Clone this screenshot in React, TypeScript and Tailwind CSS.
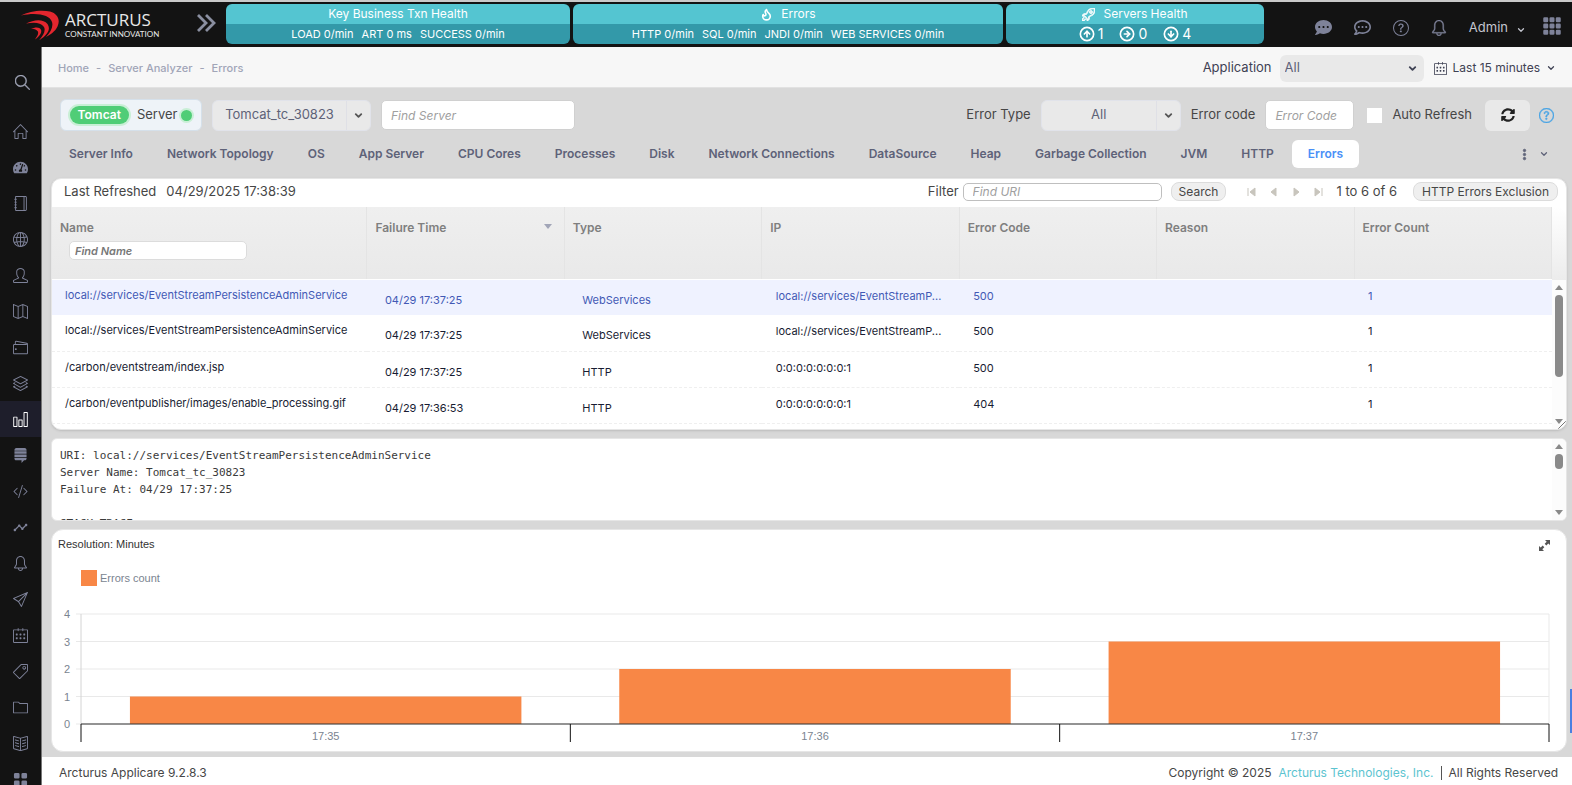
import React from "react";
import {
  SlBell,
  SlBookOpen,
  SlCalender,
  SlChart,
  SlFolder,
  SlGlobe,
  SlHome,
  SlLayers,
  SlMagnifier,
  SlMap,
  SlNotebook,
  SlPaperPlane,
  SlRocket,
  SlTag,
  SlUser,
  SlWallet,
} from "react-icons/sl";
import { FaCommentDots, FaRegCommentDots, FaStackExchange, FaTachometerAlt } from "react-icons/fa";
import { BsCodeSlash, BsGrid3X3GapFill, BsGridFill, BsQuestionCircle, BsThreeDotsVertical } from "react-icons/bs";
import { MdTimeline } from "react-icons/md";
import { ChevronDown, CircleArrowDown, CircleArrowRight, CircleArrowUp, Flame } from "lucide-react";

const sideItems = [
  { label: "Home", icon: SlHome },
  { label: "Dashboard", icon: FaTachometerAlt },
  { label: "Notebook", icon: SlNotebook },
  { label: "Web", icon: SlGlobe },
  { label: "Users", icon: SlUser },
  { label: "Map", icon: SlMap },
  { label: "Wallet", icon: SlWallet },
  { label: "Layers", icon: SlLayers },
  { label: "Server Analyzer", icon: SlChart, active: true },
  { label: "Stack", icon: FaStackExchange },
  { label: "Code", icon: BsCodeSlash },
  { label: "Trends", icon: MdTimeline },
  { label: "Alerts", icon: SlBell },
  { label: "Send", icon: SlPaperPlane },
  { label: "Calendar", icon: SlCalender },
  { label: "Tags", icon: SlTag },
  { label: "Files", icon: SlFolder },
  { label: "Docs", icon: SlBookOpen },
  { label: "Apps", icon: BsGridFill },
];

const tabs = [
  "Server Info",
  "Network Topology",
  "OS",
  "App Server",
  "CPU Cores",
  "Processes",
  "Disk",
  "Network Connections",
  "DataSource",
  "Heap",
  "Garbage Collection",
  "JVM",
  "HTTP",
  "Errors",
];

const serverStates = [
  { label: "Up", count: 1, icon: CircleArrowUp },
  { label: "Idle", count: 0, icon: CircleArrowRight },
  { label: "Down", count: 4, icon: CircleArrowDown },
];

const columns = ["Name", "Failure Time", "Type", "IP", "Error Code", "Reason", "Error Count"];

const LONG_URI = "local://services/EventStreamPersistenceAdminService";

const rows = [
  { name: LONG_URI, time: "04/29 17:37:25", type: "WebServices", ip: "local://services/EventStreamP...", code: 500, count: 1 },
  { name: LONG_URI, time: "04/29 17:37:25", type: "WebServices", ip: "local://services/EventStreamP...", code: 500, count: 1 },
  { name: "/carbon/eventstream/index.jsp", time: "04/29 17:37:25", type: "HTTP", ip: "0:0:0:0:0:0:0:1", code: 500, count: 1 },
  { name: "/carbon/eventpublisher/images/enable_processing.gif", time: "04/29 17:36:53", type: "HTTP", ip: "0:0:0:0:0:0:0:1", code: 404, count: 1 },
];

const chartData = [
  { label: "17:35", value: 1 },
  { label: "17:36", value: 2 },
  { label: "17:37", value: 3 },
];

const Logo = () => (
  <a href="#" className="flex items-center gap-[5px] pl-5 text-[#e8e8e8]">
    <svg viewBox="0 0 40 30" className="h-[30px] w-10" fill="#e3262e">
      <path d="M1 5.500C9 1 22-.5 30 1.500c8 2.300 10.500 8.500 7.500 15-2.300 5-7 8-11.500 10.500 4.500-5 7.500-10 6-15C30 4.500 16 2 1 5.500Z" />
      <path d="M6 13.500c8-4 17-5 21.500.5 4 6-1 11.500-8.500 16.500 4-5 7-9.500 5-13.500-3.500-5-10-5-18-3.500Z" />
      <path d="M11 19c4-2 8.500-2.300 10 .8 1.300 3.400-2 7-6 9.700 2.300-3.500 4-6 2.700-8.300-1.500-2-3.700-2.400-6.700-2.200Z" />
    </svg>
    <span className="flex flex-col font-['Open_Sans',sans-serif]">
      <span className="text-[17px] leading-[18px]">ARCTURUS</span>
      <span className="font-['Lato',sans-serif] text-[8px] leading-[10px] whitespace-nowrap">CONSTANT INNOVATION</span>
    </span>
  </a>
);

const HealthPanel = ({ title, icon, className, children }: { title: string; icon?: React.ReactNode; className: string; children: React.ReactNode }) => (
  <section className={`flex h-10 min-w-0 flex-col overflow-hidden rounded-md text-white ${className}`}>
    <h2 className="flex h-5 items-center justify-center gap-2 bg-[#54c5d1] text-xs">
      {icon}
      {title}
    </h2>
    <div className="flex h-5 items-center justify-center gap-2 bg-[#3399a9] text-[11px] whitespace-nowrap">{children}</div>
  </section>
);

const Header = () => (
  <header className="flex h-[47px] shrink-0 items-start border-t-2 border-[#c9c9c9] bg-[#131313]">
    <div className="flex h-[45px] w-[226px] shrink-0 items-center justify-between pr-[10px]">
      <Logo />
      <button aria-label="Expand menu" className="mb-1 text-[#8a8fa0]">
        <svg viewBox="0 0 20 18" className="h-[18px] w-5" fill="none" stroke="currentColor" strokeWidth="2.8">
          <path d="M2 1l8 8-8 8M10 1l8 8-8 8" />
        </svg>
      </button>
    </div>
    <div className="flex min-w-0 flex-1 gap-[3px] pt-[2px]">
      <HealthPanel title="Key Business Txn Health" className="flex-[344]">
        <span>LOAD 0/min</span>
        <span>ART 0 ms</span>
        <span>SUCCESS 0/min</span>
      </HealthPanel>
      <HealthPanel title="Errors" icon={<Flame size={13} strokeWidth={3} />} className="flex-[430]">
        <span>HTTP 0/min</span>
        <span>SQL 0/min</span>
        <span>JNDI 0/min</span>
        <span>WEB SERVICES 0/min</span>
      </HealthPanel>
      <HealthPanel title="Servers Health" icon={<SlRocket size={13} stroke="currentColor" strokeWidth={60} />} className="flex-[258]">
        {serverStates.map(({ label, count, icon: Icon }) => (
          <span key={label} title={label} className="mx-1 flex items-center gap-[3px] text-sm">
            <Icon size={16} strokeWidth={2.5} />
            {count}
          </span>
        ))}
      </HealthPanel>
    </div>
    <nav className="flex h-[45px] w-[308px] shrink-0 items-center justify-end gap-[22px] pt-[6px] pr-[10px] text-[#7e8299]">
      <button aria-label="Messages"><FaCommentDots size={17} /></button>
      <button aria-label="Chat"><FaRegCommentDots size={17} /></button>
      <button aria-label="Help"><BsQuestionCircle size={16} /></button>
      <button aria-label="Notifications"><SlBell size={16} strokeWidth={20} /></button>
      <div className="flex items-center gap-4">
        <button className="flex items-center gap-2 text-[13px] text-[#c4c6cf]">
          Admin
          <ChevronDown size={10} strokeWidth={3} className="mt-1" />
        </button>
        <button aria-label="Applications" className="mb-1"><BsGrid3X3GapFill size={20} /></button>
      </div>
    </nav>
  </header>
);

const Sidebar = () => (
  <aside className="flex w-[42px] shrink-0 flex-col overflow-hidden border-r border-[#777] bg-[#131313] pt-[15px] text-[#7e8299]">
    <button aria-label="Search" className="mb-[15px] flex h-9 shrink-0 items-center justify-center pt-1 pl-1 text-[#a1a5b7]">
      <SlMagnifier size={15} stroke="currentColor" strokeWidth={30} />
    </button>
    {sideItems.map(({ label, icon: Icon, active }) => (
      <a
        key={label}
        href="#"
        aria-label={label}
        className={`flex h-9 shrink-0 items-center justify-center ${active ? "bg-[#1e1e2b] text-white" : ""}`}
      >
        <Icon size={15} />
      </a>
    ))}
  </aside>
);

const ArrowSelect = ({ label, value, className }: { label: string; value: string; className: string }) => (
  <div className={`flex h-[31px] rounded-md border border-[#e1e3ea] bg-[#e9e9e9] text-[#5e6278] ${className}`}>
    <select aria-label={label} className="min-w-0 flex-1 appearance-none bg-transparent text-center text-[13px] outline-none">
      <option>{value}</option>
    </select>
    <span className="flex w-6 items-center justify-center border-l border-[#dfe0e6]">
      <ChevronDown size={11} strokeWidth={4} color="#555" />
    </span>
  </div>
);

const Breadcrumb = () => (
  <div className="flex h-[41px] shrink-0 items-center justify-between border-b border-[#e2e2e2] bg-[#f7f7f7] px-4 pt-[2px]">
    <nav className="flex gap-[7px] text-[11px] font-medium text-[#a1a5b7]">
      <a href="#">Home</a>
      <span>-</span>
      <a href="#">Server Analyzer</a>
      <span>-</span>
      <a href="#">Errors</a>
    </nav>
    <div className="flex items-center text-xs text-[#3f4254]">
      <label htmlFor="application" className="mr-2 text-[13px]">Application</label>
      <div className="mr-[10px] flex h-[27px] w-36 items-center rounded-md bg-[#e9e9e9] pr-[6px]">
        <select id="application" className="min-w-0 flex-1 appearance-none bg-transparent pl-[5px] text-[13px] text-[#5e6278] outline-none">
          <option>All</option>
        </select>
        <ChevronDown size={11} strokeWidth={4} />
      </div>
      <button className="flex items-center gap-[6px]">
        <SlCalender size={13} />
        Last 15 minutes
        <ChevronDown size={10} strokeWidth={3} />
      </button>
    </div>
  </div>
);

const Toolbar = () => (
  <div className="flex items-center text-[13px] text-[#464646]">
    <div className="mr-[10px] flex h-8 w-[142px] items-center justify-center gap-2 rounded-md border border-[#d5e0ea] bg-[#eef3f8]">
      <span className="rounded-full bg-[#50cd77] px-2 text-xs leading-[18px] font-semibold text-white ring-2 ring-[#c9efd6]">Tomcat</span>
      <span className="flex items-center gap-1">
        Server
        <i className="size-[11px] rounded-full bg-[#50cd77] ring-2 ring-[#c9efd6]" />
      </span>
    </div>
    <ArrowSelect label="Server" value="Tomcat_tc_30823" className="mr-[10px] w-[159px]" />
    <input aria-label="Find Server" placeholder="Find Server" className="h-[30px] w-[194px] rounded-[5px] border border-[#d0d0d0] bg-white px-[9px] text-xs placeholder:text-[#a0a0a0] placeholder:italic" />
    <div className="ml-auto flex items-center">
      <span className="mr-[10px]">Error Type</span>
      <ArrowSelect label="Error Type" value="All" className="mr-[10px] w-[140px]" />
      <label htmlFor="code" className="mr-[10px]">Error code</label>
      <input id="code" placeholder="Error Code" className="mr-[13px] h-[30px] w-[89px] rounded-[5px] border border-[#d0d0d0] bg-white px-[9px] text-xs placeholder:text-[#a0a0a0] placeholder:italic" />
      <label className="flex items-center gap-[10px]">
        <input type="checkbox" className="size-[15px] appearance-none bg-white" />
        Auto Refresh
      </label>
      <button aria-label="Refresh" className="ml-[13px] flex h-[31px] w-[45px] items-center justify-center rounded-md bg-[#e9e9e9] text-[#222]">
        <svg viewBox="0 0 512 512" className="size-[14px]" fill="currentColor">
          <path d="M370 133c-32-30-72-46-114-46-78 0-145 53-163 127-2 6-7 10-12 10H24c-8 0-14-7-12-14C33 94 135 8 256 8c66 0 126 26 171 68l36-36c15-15 41-4 41 17v134c0 14-10 25-24 25H346c-22 0-32-26-17-41l41-42ZM32 296h134c22 0 32 26 17 41l-41 42c32 30 72 46 114 46 78 0 145-53 163-127 2-6 7-10 12-10h57c8 0 14 7 12 14-21 116-123 202-244 202-66 0-126-26-171-68l-36 36c-15 15-41 4-41-17V321c0-14 10-25 24-25Z" />
        </svg>
      </button>
      <a href="#" aria-label="Help" className="ml-[9px] text-[#4aa5e5]"><BsQuestionCircle size={15} stroke="currentColor" strokeWidth={0.5} /></a>
    </div>
  </div>
);

const Tabs = () => (
  <div className="flex items-center justify-between text-[#5e6278]">
    <nav className="flex gap-0.5 text-xs font-semibold">
      {tabs.map((tab) => (
        <button
          key={tab}
          className={`h-7 rounded-md px-4 whitespace-nowrap ${tab === "Errors" ? "bg-white text-[#4a90f7]" : ""}`}
        >
          {tab}
        </button>
      ))}
    </nav>
    <button aria-label="More tabs" className="flex items-center gap-2 pr-[18px]">
      <BsThreeDotsVertical size={13} stroke="currentColor" strokeWidth={1} />
      <ChevronDown size={10} strokeWidth={3} />
    </button>
  </div>
);

const ScrollBar = ({ thumb }: { thumb: string }) => (
  <div className="flex min-h-0 w-[14px] flex-1 flex-col items-center bg-[#fcfcfc] py-[5px]">
    <svg viewBox="0 0 8 5" className="mb-[5px] h-[5px] w-2" fill="#8a8a8a"><path d="M4 0l4 5H0z" /></svg>
    <div className={`w-2 rounded-full bg-[#8a8a8a] ${thumb}`} />
    <svg viewBox="0 0 8 5" className="mt-auto h-[5px] w-2" fill="#8a8a8a"><path d="M4 5l4-5H0z" /></svg>
  </div>
);

const pagerIcons = [
  { label: "First", d: "M1 1v8M8 1v8L3 5z" },
  { label: "Previous", d: "M7 1v8L2 5z" },
  { label: "Next", d: "M3 1v8l5-4z" },
  { label: "Last", d: "M2 1v8l5-4zM9 1v8" },
];

const ErrorsTable = () => (
  <section className="relative flex h-[252px] flex-col overflow-hidden rounded-[10px] border border-[#e6e6e6] bg-white shadow-sm">
    <div className="flex h-7 shrink-0 items-center justify-between pr-2 pb-[3px] pl-3 text-[13px] text-[#464646]">
      <div className="flex gap-[10px]">
        <span>Last Refreshed</span>
        <span>04/29/2025 17:38:39</span>
      </div>
      <div className="flex items-center">
        <label htmlFor="uri" className="mr-1">Filter</label>
        <input id="uri" placeholder="Find URI" className="mr-[9px] h-[18px] w-[199px] rounded-[5px] border border-[#bfbfbf] px-[9px] text-xs placeholder:text-[#a0a0a0] placeholder:italic" />
        <button className="mr-[21px] h-[19px] rounded-lg border border-[#dcdcdc] bg-[#efefef] px-[7px] text-xs leading-none">Search</button>
        <div className="mr-[13px] flex gap-3">
          {pagerIcons.map(({ label, d }) => (
            <button key={label} aria-label={label}>
              <svg viewBox="0 0 10 10" className="size-[10px]" fill="#c8c5bd" stroke="#c8c5bd" strokeWidth="1"><path d={d} /></svg>
            </button>
          ))}
        </div>
        <span className="mr-4">1 to 6 of 6</span>
        <button className="h-[19px] rounded-lg border border-[#dcdcdc] bg-[#efefef] px-2 text-xs leading-none">HTTP Errors Exclusion</button>
      </div>
    </div>
    <div className="flex min-h-0 flex-1">
      <table className="h-fit w-full flex-1 table-fixed border-collapse text-left text-[11px] text-[#181c32]">
        <thead>
          <tr className="h-[72px] bg-linear-to-b from-[#efefef] to-[#e9e9e9] text-xs text-[#7f7f7f]">
            {columns.map((col) => (
              <th
                key={col}
                className={`border-r border-b border-r-[#e4e4e4] border-b-white px-2 pt-[13px] align-top font-semibold ${col === "Name" ? "w-[21%]" : ""}`}
              >
                <div className="flex items-start justify-between">
                  {col}
                  {col === "Failure Time" && (
                    <svg viewBox="0 0 8 5" className="mt-1 mr-1 h-[5px] w-2" fill="#a1a5b7"><path d="M0 0h8L4 5z" /></svg>
                  )}
                </div>
                {col === "Name" && (
                  <input aria-label="Find Name" placeholder="Find Name" className="mt-[5px] ml-[9px] block h-[19px] w-[178px] rounded-[5px] border border-[#dcdcdc] bg-white px-[5px] text-[11px] font-semibold placeholder:text-[#777] placeholder:italic" />
                )}
              </th>
            ))}
          </tr>
        </thead>
        <tbody>
          {rows.map((row, i) => (
            <tr
              key={i}
              className={`h-9 align-top leading-[18px] ${i === 0 ? "bg-[#eff2ff] text-[#4259b5]" : "border-b border-dashed border-[#efefef]"}`}
            >
              <td className="pt-[6px] pl-[13px] whitespace-nowrap">{row.name}</td>
              <td className="pt-[11px] pl-[18px]">{row.time}</td>
              <td className="pt-[11px] pl-[18px]">{row.type}</td>
              <td className="pt-[7px] pl-[14px] whitespace-nowrap">{row.ip}</td>
              <td className="pt-[7px] pl-[14px]">{row.code}</td>
              <td />
              <td className="pt-[7px] pl-[14px]">{row.count}</td>
            </tr>
          ))}
        </tbody>
      </table>
      <div className="flex w-[14px] flex-col">
        <div className="h-[73px] shrink-0 rounded-tr-[10px] bg-linear-to-b from-white to-[#ececec]" />
        <ScrollBar thumb="h-[82px]" />
      </div>
    </div>
    <svg viewBox="0 0 8 8" className="absolute right-0 bottom-0 size-2" stroke="#777" strokeWidth="1"><path d="M0 8l8-8M4 8l4-4" /></svg>
  </section>
);

const Detail = () => (
  <section className="flex h-[83px] overflow-hidden rounded-md border border-[#e6e6e6] bg-white">
    <pre className="min-w-0 flex-1 overflow-hidden pt-2 pl-2 font-['DejaVu_Sans_Mono',monospace] text-[11px] leading-[17px] text-[#3a3a3a]">
      {`URI: ${LONG_URI}
Server Name: Tomcat_tc_30823
Failure At: 04/29 17:37:25

STACK TRACE`}
    </pre>
    <div className="flex">
      <ScrollBar thumb="h-[15px]" />
    </div>
  </section>
);

const STEP = 27.5;

const ChartCard = () => (
  <section className="flex h-[223px] flex-col rounded-xl border border-[#e6e6e6] bg-white font-['Liberation_Sans',sans-serif] text-[11px]">
    <div className="flex items-start justify-between pt-[6px] pr-4 pl-[6px] text-[#333]">
      <h3 className="leading-4">Resolution: Minutes</h3>
      <button aria-label="Expand chart" className="mt-1 text-[#555]">
        <svg viewBox="0 0 11 11" className="size-[11px]" fill="currentColor">
          <path d="M6 0h5v5L9.300 3.400 7.300 5.400 5.700 3.800 7.700 1.800zM5 11H0V6l1.700 1.600 2-2 1.600 1.600-2 2z" />
        </svg>
      </button>
    </div>
    <div className="mt-[18px] flex items-center gap-[3px] pl-[29px] text-[#7a8490]">
      <span className="size-4 bg-[#f88746]" />
      Errors count
    </div>
    <div className="mt-[27px] pr-[17px] pl-[29px]">
      <svg className="block h-[132px] w-full overflow-visible" fill="#7a8490">
        {[4, 3, 2, 1, 0].map((n) => (
          <g key={n}>
            <line x1="-5" x2="100%" y1={(4 - n) * STEP} y2={(4 - n) * STEP} stroke="#e9e9e9" />
            <text x="-11" y={(4 - n) * STEP + 4} textAnchor="end">{n}</text>
          </g>
        ))}
        <line x1="0" x2="0" y1="0" y2={STEP * 4} stroke="#d4d4d4" />
        <line x1="100%" x2="100%" y1="0" y2={STEP * 4} stroke="#e9e9e9" />
        {chartData.map(({ label, value }, i) => (
          <g key={label}>
            <rect x={`${i * 33.333 + 3.333}%`} y={(4 - value) * STEP} width="26.667%" height={value * STEP} fill="#f88746" />
            <text x={`${i * 33.333 + 16.667}%`} y={STEP * 4 + 16} textAnchor="middle">{label}</text>
          </g>
        ))}
        <line x1="0" x2="100%" y1={STEP * 4} y2={STEP * 4} stroke="#333" />
        {[0, 33.333, 66.667, 100].map((x) => (
          <line key={x} x1={`${x}%`} x2={`${x}%`} y1={STEP * 4} y2={STEP * 4 + 18} stroke="#111" />
        ))}
      </svg>
    </div>
  </section>
);

const Footer = () => (
  <footer className="flex items-center justify-between bg-white pt-2 pr-[14px] pb-1 pl-[17px] text-xs leading-4 text-[#464646]">
    <span>Arcturus Applicare 9.2.8.3</span>
    <div className="flex items-center gap-[7px]">
      <span>Copyright © 2025</span>
      <a href="#" className="text-[#5cc4d0]">Arcturus Technologies, Inc.</a>
      <span className="h-[14px] border-l border-[#555]" />
      <span>All Rights Reserved</span>
    </div>
  </footer>
);

const App = () => {
  return (
    <div className="flex h-screen flex-col overflow-hidden bg-[#d8d8d8] font-[Inter,sans-serif]">
      <Header />
      <div className="flex min-h-0 flex-1">
        <Sidebar />
        <div className="flex min-w-0 flex-1 flex-col">
          <Breadcrumb />
          <main className="flex flex-1 flex-col pr-[5px] pl-[9px]">
            <div className="pt-[11px] pr-[13px] pl-[9px]">
              <Toolbar />
            </div>
            <div className="mt-[9px] mb-[10px] pl-[2px]">
              <Tabs />
            </div>
            <div className="flex flex-col gap-2">
              <ErrorsTable />
              <Detail />
              <ChartCard />
            </div>
          </main>
          <Footer />
        </div>
      </div>
      <button aria-label="Feedback" className="absolute top-[689px] right-0 h-11 w-[2px] bg-[#4a7fe0]" />
    </div>
  );
};

export default App;
